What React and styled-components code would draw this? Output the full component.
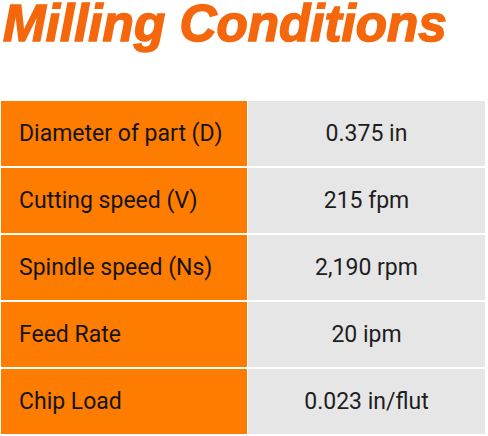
import React from "react";
import styled, { createGlobalStyle } from "styled-components";

const GlobalStyle = createGlobalStyle`
  html, body {
    margin: 0;
    padding: 0;
    background: #fff;
  }
`;

const Page = styled.div`
  width: 488px;
  height: 436px;
  background: #fff;
  overflow: hidden;
`;

const Header = styled.div`
  height: 101px;
  padding-left: 3px;
`;

const Title = styled.h1`
  display: inline-block;
  margin: 0;
  color: #f5670c;
  font-family: "Liberation Sans", Arial, sans-serif;
  font-size: 52px;
  font-style: italic;
  font-weight: 700;
  line-height: 46px;
  white-space: nowrap;
  -webkit-text-stroke: 1.6px #f5670c;
  transform: scaleX(0.985);
  transform-origin: left center;
`;

const Table = styled.div`
  display: grid;
  grid-template-columns: 246px 237px;
  grid-auto-rows: 65px;
  column-gap: 1px;
  row-gap: 2px;
  margin-left: 1px;
`;

const Cell = styled.div`
  display: flex;
  align-items: center;
  justify-content: ${(p) => (p.$label ? "flex-start" : "center")};
  padding-left: ${(p) => (p.$label ? "18px" : "0")};
  background: ${(p) => (p.$label ? "#fe7c00" : "#e6e6e6")};
  color: ${(p) => (p.$label ? "#141414" : "#1e1e1e")};
  font-family: Roboto, "Liberation Sans", sans-serif;
  font-size: 23px;
  font-weight: 400;
`;

const rows = [
  ["Diameter of part (D)", "0.375 in"],
  ["Cutting speed (V)", "215 fpm"],
  ["Spindle speed (Ns)", "2,190 rpm"],
  ["Feed Rate", "20 ipm"],
  ["Chip Load", "0.023 in/flut"],
];

const App = () => {
  return (
    <Page>
      <GlobalStyle />
      <Header>
        <Title>Milling Conditions</Title>
      </Header>
      <Table>
        {rows.map(([label, value]) => (
          <React.Fragment key={label}>
            <Cell $label>{label}</Cell>
            <Cell>{value}</Cell>
          </React.Fragment>
        ))}
      </Table>
    </Page>
  );
};

export default App;
